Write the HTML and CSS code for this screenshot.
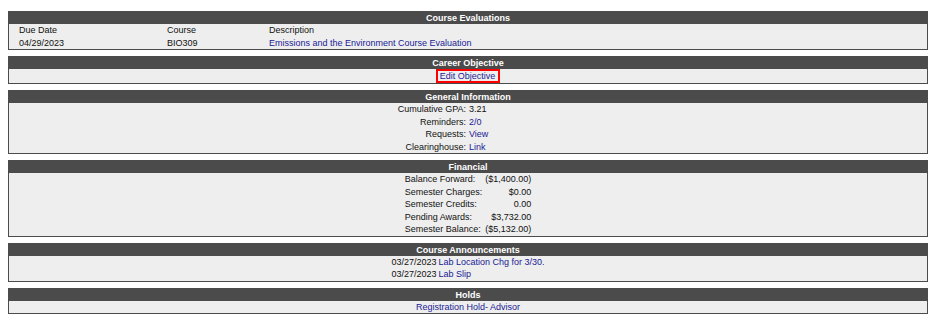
FILE: index.html
```html
<!DOCTYPE html>
<html>
<head>
<meta charset="utf-8">
<link rel="stylesheet" href="styles.css">
</head>
<body>
<div class="page">
  <section class="box">
    <div class="box-head">Course Evaluations</div>
    <div class="eval-grid">
      <div class="row">Due Date</div><div class="row">Course</div><div class="row">Description</div>
      <div class="row">04/29/2023</div><div class="row">BIO309</div><div class="row"><a href="#" class="lnk">Emissions and the Environment Course Evaluation</a></div>
    </div>
  </section>

  <section class="box">
    <div class="box-head">Career Objective</div>
    <div class="career-row"><a href="#" class="lnk edit-obj">Edit Objective</a></div>
  </section>

  <section class="box">
    <div class="box-head">General Information</div>
    <div class="info-grid">
      <div class="row lbl">Cumulative GPA:</div><div class="row val">3.21</div>
      <div class="row lbl">Reminders:</div><div class="row val"><a href="#" class="lnk">2/0</a></div>
      <div class="row lbl">Requests:</div><div class="row val"><a href="#" class="lnk">View</a></div>
      <div class="row lbl">Clearinghouse:</div><div class="row val"><a href="#" class="lnk">Link</a></div>
    </div>
  </section>

  <section class="box">
    <div class="box-head">Financial</div>
    <div class="center-wrap">
      <div class="fin-grid">
        <div class="row">Balance Forward:</div><div class="row num">($1,400.00)</div>
        <div class="row">Semester Charges:</div><div class="row num">$0.00</div>
        <div class="row">Semester Credits:</div><div class="row num">0.00</div>
        <div class="row">Pending Awards:</div><div class="row num">$3,732.00</div>
        <div class="row">Semester Balance:</div><div class="row num">($5,132.00)</div>
      </div>
    </div>
  </section>

  <section class="box">
    <div class="box-head">Course Announcements</div>
    <div class="center-wrap">
      <div class="ann-grid">
        <div class="row">03/27/2023</div><div class="row"><a href="#" class="lnk">Lab Location Chg for 3/30.</a></div>
        <div class="row">03/27/2023</div><div class="row"><a href="#" class="lnk">Lab Slip</a></div>
      </div>
    </div>
  </section>

  <section class="box">
    <div class="box-head">Holds</div>
    <div class="row centered"><a href="#" class="lnk">Registration Hold- Advisor</a></div>
  </section>
</div>
</body>
</html>
```

FILE: styles.css
```css
html, body {
  margin: 0;
  padding: 0;
  background: #ffffff;
}

body {
  font-family: "Liberation Sans", Arial, sans-serif;
  font-size: 9px;
  color: #111111;
}

.page {
  padding: 11px 8px 0 8px;
  display: flex;
  flex-direction: column;
  gap: 6px;
}

.box {
  border: 1px solid #4b4b4b;
  background: #eeeeee;
}

.box-head {
  background: #4b4b4b;
  color: #ffffff;
  font-weight: bold;
  text-align: center;
  height: 12px;
  line-height: 12px;
}

.row {
  line-height: 12.5px;
  height: 12.5px;
  white-space: nowrap;
}

.lnk {
  color: #1a1a96;
  text-decoration: none;
}

.eval-grid {
  display: grid;
  grid-template-columns: 148px 102px 1fr;
  padding-left: 10px;
}

.career-row {
  height: 14px;
  text-align: center;
}

.edit-obj {
  display: inline-block;
  border: 2px solid #ff0000;
  padding: 0 3px 0 2px;
  height: 10px;
  line-height: 10px;
  vertical-align: top;
}

.info-grid {
  display: grid;
  grid-template-columns: 1fr 1fr;
}

.info-grid .lbl {
  text-align: right;
  padding-right: 2px;
}

.info-grid .val {
  text-align: left;
  padding-left: 1px;
}

.center-wrap {
  display: flex;
  justify-content: center;
}

.fin-grid {
  display: grid;
  grid-template-columns: auto auto;
  column-gap: 3px;
}

.fin-grid .num {
  text-align: right;
}

.ann-grid {
  display: grid;
  grid-template-columns: auto auto;
  column-gap: 2px;
}

.centered {
  text-align: center;
}
```
